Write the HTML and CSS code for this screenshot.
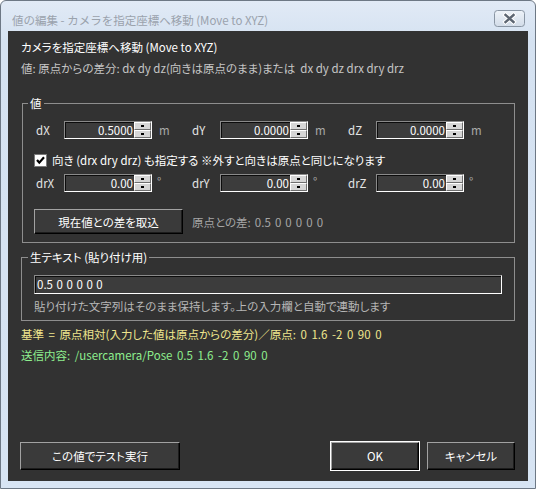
FILE: index.html
```html
<!DOCTYPE html>
<html lang="ja">
<head>
<meta charset="utf-8">
<title>値の編集</title>
<link rel="stylesheet" href="styles.css">
</head>
<body>
<div class="window">
  <div class="titlebar">
    <span class="title">値の編集 - カメラを指定座標へ移動 (Move to XYZ)</span>
    <div class="close">
      <svg width="31" height="17" viewBox="0 0 31 17">
        <defs>
          <linearGradient id="cg" x1="0" y1="0" x2="0" y2="1">
            <stop offset="0" stop-color="#eef3f9"/>
            <stop offset="1" stop-color="#d2dce8"/>
          </linearGradient>
        </defs>
        <rect x="0.5" y="0.5" width="30" height="16" rx="3" fill="url(#cg)" stroke="#8995a3"/>
        <path d="M11.5 5 L19.5 12 M19.5 5 L11.5 12" stroke="#ffffff" stroke-width="4.4" stroke-linecap="square"/>
        <path d="M11.5 5 L19.5 12 M19.5 5 L11.5 12" stroke="#5d6672" stroke-width="2.4" stroke-linecap="square"/>
      </svg>
    </div>
  </div>
  <div class="client">
    <div class="heading">カメラを指定座標へ移動 (Move to XYZ)</div>
    <div class="subtitle">値: 原点からの差分: dx dy dz(向きは原点のまま)または  dx dy dz drx dry drz</div>

    <fieldset class="group group-values">
      <legend>値</legend>
      <div class="vrow">
        <span class="lbl">dX</span>
        <div class="spin"><span class="val">0.5000</span><span class="arrows"><i></i><i></i></span></div>
        <span class="unit">m</span>
        <span class="lbl">dY</span>
        <div class="spin"><span class="val">0.0000</span><span class="arrows"><i></i><i></i></span></div>
        <span class="unit">m</span>
        <span class="lbl">dZ</span>
        <div class="spin"><span class="val">0.0000</span><span class="arrows"><i></i><i></i></span></div>
        <span class="unit">m</span>
      </div>
      <div class="check">
        <span class="box"><svg width="11" height="11" viewBox="0 0 11 11"><path d="M2 5 L4.3 7.6 L9 2.2" fill="none" stroke="#000" stroke-width="2.2"/></svg></span>
        <span>向き (drx dry drz) も指定する ※外すと向きは原点と同じになります</span>
      </div>
      <div class="vrow vrow2">
        <span class="lbl">drX</span>
        <div class="spin"><span class="val">0.00</span><span class="arrows"><i></i><i></i></span></div>
        <span class="unit deg">°</span>
        <span class="lbl">drY</span>
        <div class="spin"><span class="val">0.00</span><span class="arrows"><i></i><i></i></span></div>
        <span class="unit deg">°</span>
        <span class="lbl">drZ</span>
        <div class="spin"><span class="val">0.00</span><span class="arrows"><i></i><i></i></span></div>
        <span class="unit deg">°</span>
      </div>
      <div class="btnrow">
        <div class="btn btn-take">現在値との差を取込</div>
        <span class="diff">原点との差: 0.5 0 0 0 0 0</span>
      </div>
    </fieldset>

    <fieldset class="group group-raw">
      <legend>生テキスト (貼り付け用)</legend>
      <div class="rawinput">0.5 0 0 0 0 0</div>
      <div class="help">貼り付けた文字列はそのまま保持します。上の入力欄と自動で連動します</div>
    </fieldset>

    <div class="base">基準 = 原点相対(入力した値は原点からの差分)／原点: 0 1.6 -2 0 90 0</div>
    <div class="send">送信内容: /usercamera/Pose 0.5 1.6 -2 0 90 0</div>

    <div class="footer">
      <div class="btn btn-test">この値でテスト実行</div>
      <div class="spacer"></div>
      <div class="btn btn-ok">OK</div>
      <div class="btn btn-cancel">キャンセル</div>
    </div>
  </div>
</div>
</body>
</html>
```

FILE: styles.css
```css
html, body {
  margin: 0;
  padding: 0;
  background: #ffffff;
}

body {
  font-family: "Noto Sans CJK JP", "Noto Sans", sans-serif;
  font-size: 11.5px;
  font-feature-settings: "palt";
}

.window {
  width: 536px;
  height: 489px;
  box-sizing: border-box;
  border: 1px solid #6d7885;
  border-radius: 6px 6px 0 0;
  background: linear-gradient(#e1eaf6, #d5e2f1 40px, #d7e4f3);
  padding: 0 7px 7px;
  display: flex;
  flex-direction: column;
}

.titlebar {
  height: 30px;
  flex: none;
  display: flex;
  justify-content: space-between;
  align-items: flex-start;
}

.title {
  padding: 11px 0 0 4px;
  line-height: 16px;
  font-size: 11.5px;
  font-feature-settings: normal;
  color: #9aa2ac;
}

.close {
  margin: 9px 3px 0 0;
  width: 31px;
  height: 17px;
}

.close svg {
  display: block;
}

.client {
  flex: 1;
  background: #323232;
  display: flex;
  flex-direction: column;
  padding: 0 13px 11px;
}

.heading {
  color: #ffffff;
  line-height: 20px;
  margin-top: 6px;
}

.subtitle {
  color: #c6c6c6;
  line-height: 20px;
  margin-top: 1px;
  white-space: pre;
}

.group {
  margin: 0;
  border: 1px solid #8e8e8e;
  min-width: 0;
}

.group legend {
  color: #ffffff;
  line-height: 16px;
  padding: 0 2px;
}

.group-values {
  margin: 17px 0 0 1px;
  padding: 10px 12px 8px 13px;
}

.group-values legend {
  margin-left: -8px;
}

.vrow {
  display: grid;
  grid-template-columns: 28px 88px 40px 28px 88px 40px 28px 88px auto;
  align-items: center;
  height: 18px;
}

.vrow2 {
  margin-top: 4px;
}

.lbl {
  color: #e4e4e4;
  line-height: 16px;
}

.unit {
  padding-left: 7px;
  color: #a8a8a8;
  line-height: 16px;
}

.deg {
  align-self: start;
  padding-left: 5px;
  line-height: 14px;
}

.spin {
  width: 88px;
  height: 18px;
  box-sizing: border-box;
  border: 1px solid;
  border-color: #8a8a8a #ffffff #ffffff #8a8a8a;
  box-shadow: inset 1px 1px 0 #0c0c0c;
  background: #3c3c3c;
  display: flex;
}

.val {
  flex: 1;
  text-align: right;
  color: #ffffff;
  line-height: 16px;
  padding-right: 1px;
}

.arrows {
  width: 17px;
  display: flex;
  flex-direction: column;
}

.arrows i {
  flex: 1;
  position: relative;
  box-sizing: border-box;
  background: #d6d6d6;
  border: 1px solid;
  border-color: #ffffff #6e6e6e #6e6e6e #ffffff;
}

.arrows i::after {
  content: "";
  position: absolute;
  left: 6px;
  top: 2px;
  width: 3px;
  height: 2px;
  background: #000000;
}

.check {
  margin-top: 11px;
  height: 20px;
  display: flex;
  align-items: center;
  color: #ffffff;
  line-height: 16px;
}

.box {
  width: 13px;
  height: 13px;
  box-sizing: border-box;
  margin-left: -2px;
  margin-right: 5px;
  background: #ffffff;
  border: 1px solid #7a7a7a;
  display: flex;
  align-items: center;
  justify-content: center;
}

.box svg {
  display: block;
}

.btnrow {
  margin-top: 17px;
  display: flex;
  align-items: center;
  gap: 9px;
}

.btn {
  box-sizing: border-box;
  background: #3a3a3a;
  border: 1px solid;
  border-color: #a2a2a2 #000000 #000000 #a2a2a2;
  box-shadow: inset -1px -1px 0 #1c1c1c;
  color: #ffffff;
  display: flex;
  align-items: center;
  justify-content: center;
  line-height: 16px;
}

.btn-take {
  width: 149px;
  height: 25px;
  margin-left: -2px;
}

.diff {
  color: #a6a6a6;
  line-height: 16px;
  word-spacing: 1.5px;
}

.group-raw {
  margin: 6px 0 0 0;
  padding: 10px 12px 6px 12px;
}

.group-raw legend {
  margin-left: -6px;
}

.rawinput {
  height: 19px;
  box-sizing: border-box;
  border: 1px solid;
  border-color: #8a8a8a #ffffff #ffffff #8a8a8a;
  box-shadow: inset 1px 1px 0 #0c0c0c;
  background: #3c3c3c;
  color: #ffffff;
  line-height: 17px;
  padding-left: 2px;
  word-spacing: 1px;
}

.help {
  margin-top: 4px;
  line-height: 16px;
  color: #b6b6b6;
}

.base {
  margin-top: 5px;
  line-height: 16px;
  color: #efe68e;
  word-spacing: 2px;
}

.send {
  margin-top: 5px;
  line-height: 16px;
  color: #8eee8e;
  word-spacing: 2px;
}

.footer {
  margin-top: auto;
  display: flex;
  align-items: flex-end;
}

.spacer {
  flex: 1;
}

.btn-test {
  width: 160px;
  height: 28px;
  margin-left: -1px;
}

.btn-ok {
  width: 88px;
  height: 28px;
  outline: 1px solid #ffffff;
  outline-offset: 0;
  margin-right: 8px;
}

.btn-cancel {
  width: 88px;
  height: 28px;
}
```
